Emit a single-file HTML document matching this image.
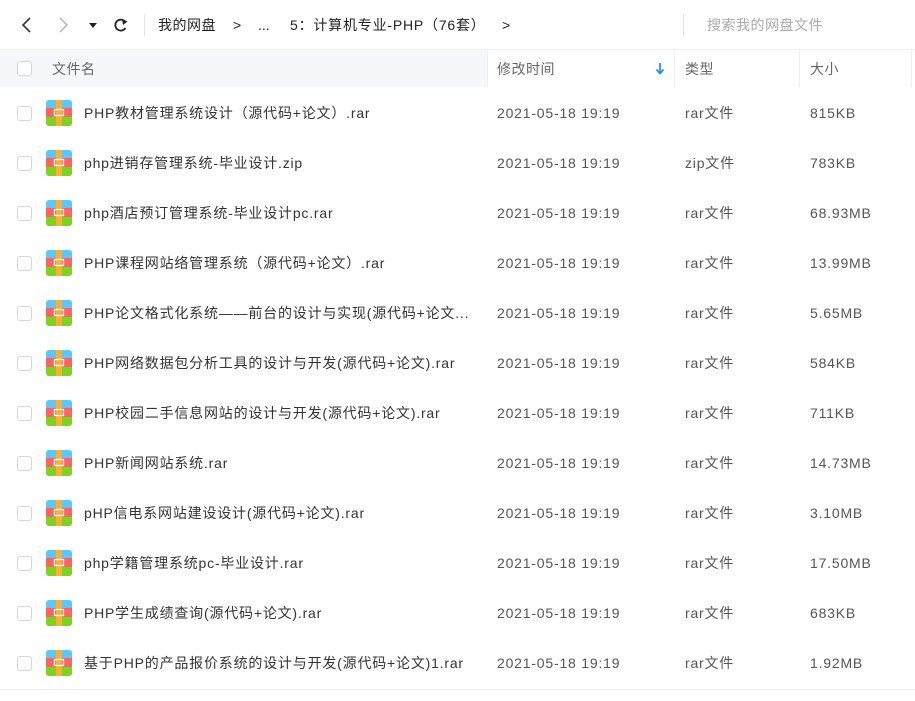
<!DOCTYPE html>
<html><head><meta charset="utf-8"><style>
*{margin:0;padding:0;box-sizing:border-box}
body{width:915px;height:701px;background:#fff;font-family:"Liberation Sans","Noto Sans CJK SC",sans-serif;color:#333;position:relative;overflow:hidden}
.t{position:absolute;white-space:nowrap;line-height:20px}
.cb{position:absolute;left:17px;width:15px;height:15px;border:1px solid #d3d6dc;border-radius:3px;background:#fff}
.row{position:absolute;left:0;width:915px;height:50px}
.row .t{letter-spacing:0.8px}
.row .n{left:84px;top:15px;font-size:14px;color:#333}
.row .d{left:497px;top:15px;font-size:14px;color:#555}
.row .y{left:685px;top:15px;font-size:14px;color:#555}
.row .s{left:810px;top:15px;font-size:14px;color:#555}
.ic{position:absolute;left:46px;top:12px}
.hd{letter-spacing:0.5px}
</style></head><body>
<svg class="t" style="left:18px;top:15px" width="120" height="20" viewBox="0 0 120 20">
<path d="M12 3 L5 10 L12 17" fill="none" stroke="#333" stroke-width="1.6"/>
<path d="M42 3 L49 10 L42 17" fill="none" stroke="#bbb" stroke-width="1.6"/>
<path d="M71 8 L79 8 L75 13 Z" fill="#222"/>
<path d="M107 6.5 A5.5 5.5 0 1 0 107.5 13" fill="none" stroke="#222" stroke-width="1.8"/>
<path d="M104 4 L109.5 6.5 L105 10 Z" fill="#222"/>
</svg>
<div class="t" style="left:144px;top:14px;width:1px;height:22px;background:#e5e5e5"></div>
<div class="t hd" style="left:158px;top:15px;font-size:14px;color:#222">我的网盘</div>
<div class="t" style="left:233px;top:15px;font-size:14px;color:#222">&gt;</div>
<div class="t" style="left:258px;top:15px;font-size:14px;color:#222">...</div>
<div class="t hd" style="left:290px;top:15px;font-size:14px;color:#222;letter-spacing:0.8px">5：计算机专业-PHP（76套）</div>
<div class="t" style="left:502px;top:15px;font-size:14px;color:#222">&gt;</div>
<div class="t" style="left:683px;top:14px;width:1px;height:22px;background:#e5e5e5"></div>
<div class="t hd" style="left:707px;top:15px;font-size:14px;color:#aaa">搜索我的网盘文件</div>
<div class="t" style="left:0;top:49px;width:915px;height:1px;background:#f0f0f0"></div>
<div class="t" style="left:0;top:50px;width:487px;height:37px;background:#f5f7fa"></div>
<div class="t" style="left:487px;top:50px;width:1px;height:37px;background:#eee"></div>
<div class="t" style="left:674px;top:50px;width:1px;height:37px;background:#eee"></div>
<div class="t" style="left:799px;top:50px;width:1px;height:37px;background:#eee"></div>
<div class="t" style="left:911px;top:50px;width:1px;height:37px;background:#eee"></div>
<div class="cb" style="top:61px"></div>
<div class="t hd" style="left:52px;top:59px;font-size:14px;color:#666">文件名</div>
<div class="t hd" style="left:497px;top:59px;font-size:14px;color:#666">修改时间</div>
<svg class="t" style="left:655px;top:62px" width="10" height="14"><path d="M5 1 V11 M1.5 7.5 L5 11.5 L8.5 7.5" fill="none" stroke="#2b8ff5" stroke-width="1.8"/></svg>
<div class="t hd" style="left:685px;top:59px;font-size:14px;color:#666">类型</div>
<div class="t hd" style="left:810px;top:59px;font-size:14px;color:#666">大小</div>
<div class="t" style="left:0;top:689px;width:915px;height:1px;background:#eee"></div>
<div class="row" style="top:88px"><div class="cb" style="top:18px"></div><svg class="ic" width="26" height="26"><rect width="26" height="26" rx="3" fill="#5ac8fa"/><rect y="8" width="26" height="9" fill="#fe6363"/><path d="M0 17H26V23A3 3 0 0 1 23 26H3A3 3 0 0 1 0 23Z" fill="#7ed321"/><rect x="10" width="6" height="26" fill="#fbb034"/><rect x="8.5" y="9.5" width="9" height="6" fill="none" stroke="#fff" stroke-width="1.3"/></svg><div class="t n">PHP教材管理系统设计（源代码+论文）.rar</div><div class="t d">2021-05-18 19:19</div><div class="t y">rar文件</div><div class="t s">815KB</div></div>
<div class="row" style="top:138px"><div class="cb" style="top:18px"></div><svg class="ic" width="26" height="26"><rect width="26" height="26" rx="3" fill="#5ac8fa"/><rect y="8" width="26" height="9" fill="#fe6363"/><path d="M0 17H26V23A3 3 0 0 1 23 26H3A3 3 0 0 1 0 23Z" fill="#7ed321"/><rect x="10" width="6" height="26" fill="#fbb034"/><rect x="8.5" y="9.5" width="9" height="6" fill="none" stroke="#fff" stroke-width="1.3"/></svg><div class="t n">php进销存管理系统-毕业设计.zip</div><div class="t d">2021-05-18 19:19</div><div class="t y">zip文件</div><div class="t s">783KB</div></div>
<div class="row" style="top:188px"><div class="cb" style="top:18px"></div><svg class="ic" width="26" height="26"><rect width="26" height="26" rx="3" fill="#5ac8fa"/><rect y="8" width="26" height="9" fill="#fe6363"/><path d="M0 17H26V23A3 3 0 0 1 23 26H3A3 3 0 0 1 0 23Z" fill="#7ed321"/><rect x="10" width="6" height="26" fill="#fbb034"/><rect x="8.5" y="9.5" width="9" height="6" fill="none" stroke="#fff" stroke-width="1.3"/></svg><div class="t n">php酒店预订管理系统-毕业设计pc.rar</div><div class="t d">2021-05-18 19:19</div><div class="t y">rar文件</div><div class="t s">68.93MB</div></div>
<div class="row" style="top:238px"><div class="cb" style="top:18px"></div><svg class="ic" width="26" height="26"><rect width="26" height="26" rx="3" fill="#5ac8fa"/><rect y="8" width="26" height="9" fill="#fe6363"/><path d="M0 17H26V23A3 3 0 0 1 23 26H3A3 3 0 0 1 0 23Z" fill="#7ed321"/><rect x="10" width="6" height="26" fill="#fbb034"/><rect x="8.5" y="9.5" width="9" height="6" fill="none" stroke="#fff" stroke-width="1.3"/></svg><div class="t n">PHP课程网站络管理系统（源代码+论文）.rar</div><div class="t d">2021-05-18 19:19</div><div class="t y">rar文件</div><div class="t s">13.99MB</div></div>
<div class="row" style="top:288px"><div class="cb" style="top:18px"></div><svg class="ic" width="26" height="26"><rect width="26" height="26" rx="3" fill="#5ac8fa"/><rect y="8" width="26" height="9" fill="#fe6363"/><path d="M0 17H26V23A3 3 0 0 1 23 26H3A3 3 0 0 1 0 23Z" fill="#7ed321"/><rect x="10" width="6" height="26" fill="#fbb034"/><rect x="8.5" y="9.5" width="9" height="6" fill="none" stroke="#fff" stroke-width="1.3"/></svg><div class="t n">PHP论文格式化系统——前台的设计与实现(源代码+论文...</div><div class="t d">2021-05-18 19:19</div><div class="t y">rar文件</div><div class="t s">5.65MB</div></div>
<div class="row" style="top:338px"><div class="cb" style="top:18px"></div><svg class="ic" width="26" height="26"><rect width="26" height="26" rx="3" fill="#5ac8fa"/><rect y="8" width="26" height="9" fill="#fe6363"/><path d="M0 17H26V23A3 3 0 0 1 23 26H3A3 3 0 0 1 0 23Z" fill="#7ed321"/><rect x="10" width="6" height="26" fill="#fbb034"/><rect x="8.5" y="9.5" width="9" height="6" fill="none" stroke="#fff" stroke-width="1.3"/></svg><div class="t n">PHP网络数据包分析工具的设计与开发(源代码+论文).rar</div><div class="t d">2021-05-18 19:19</div><div class="t y">rar文件</div><div class="t s">584KB</div></div>
<div class="row" style="top:388px"><div class="cb" style="top:18px"></div><svg class="ic" width="26" height="26"><rect width="26" height="26" rx="3" fill="#5ac8fa"/><rect y="8" width="26" height="9" fill="#fe6363"/><path d="M0 17H26V23A3 3 0 0 1 23 26H3A3 3 0 0 1 0 23Z" fill="#7ed321"/><rect x="10" width="6" height="26" fill="#fbb034"/><rect x="8.5" y="9.5" width="9" height="6" fill="none" stroke="#fff" stroke-width="1.3"/></svg><div class="t n">PHP校园二手信息网站的设计与开发(源代码+论文).rar</div><div class="t d">2021-05-18 19:19</div><div class="t y">rar文件</div><div class="t s">711KB</div></div>
<div class="row" style="top:438px"><div class="cb" style="top:18px"></div><svg class="ic" width="26" height="26"><rect width="26" height="26" rx="3" fill="#5ac8fa"/><rect y="8" width="26" height="9" fill="#fe6363"/><path d="M0 17H26V23A3 3 0 0 1 23 26H3A3 3 0 0 1 0 23Z" fill="#7ed321"/><rect x="10" width="6" height="26" fill="#fbb034"/><rect x="8.5" y="9.5" width="9" height="6" fill="none" stroke="#fff" stroke-width="1.3"/></svg><div class="t n">PHP新闻网站系统.rar</div><div class="t d">2021-05-18 19:19</div><div class="t y">rar文件</div><div class="t s">14.73MB</div></div>
<div class="row" style="top:488px"><div class="cb" style="top:18px"></div><svg class="ic" width="26" height="26"><rect width="26" height="26" rx="3" fill="#5ac8fa"/><rect y="8" width="26" height="9" fill="#fe6363"/><path d="M0 17H26V23A3 3 0 0 1 23 26H3A3 3 0 0 1 0 23Z" fill="#7ed321"/><rect x="10" width="6" height="26" fill="#fbb034"/><rect x="8.5" y="9.5" width="9" height="6" fill="none" stroke="#fff" stroke-width="1.3"/></svg><div class="t n">pHP信电系网站建设设计(源代码+论文).rar</div><div class="t d">2021-05-18 19:19</div><div class="t y">rar文件</div><div class="t s">3.10MB</div></div>
<div class="row" style="top:538px"><div class="cb" style="top:18px"></div><svg class="ic" width="26" height="26"><rect width="26" height="26" rx="3" fill="#5ac8fa"/><rect y="8" width="26" height="9" fill="#fe6363"/><path d="M0 17H26V23A3 3 0 0 1 23 26H3A3 3 0 0 1 0 23Z" fill="#7ed321"/><rect x="10" width="6" height="26" fill="#fbb034"/><rect x="8.5" y="9.5" width="9" height="6" fill="none" stroke="#fff" stroke-width="1.3"/></svg><div class="t n">php学籍管理系统pc-毕业设计.rar</div><div class="t d">2021-05-18 19:19</div><div class="t y">rar文件</div><div class="t s">17.50MB</div></div>
<div class="row" style="top:588px"><div class="cb" style="top:18px"></div><svg class="ic" width="26" height="26"><rect width="26" height="26" rx="3" fill="#5ac8fa"/><rect y="8" width="26" height="9" fill="#fe6363"/><path d="M0 17H26V23A3 3 0 0 1 23 26H3A3 3 0 0 1 0 23Z" fill="#7ed321"/><rect x="10" width="6" height="26" fill="#fbb034"/><rect x="8.5" y="9.5" width="9" height="6" fill="none" stroke="#fff" stroke-width="1.3"/></svg><div class="t n">PHP学生成绩查询(源代码+论文).rar</div><div class="t d">2021-05-18 19:19</div><div class="t y">rar文件</div><div class="t s">683KB</div></div>
<div class="row" style="top:638px"><div class="cb" style="top:18px"></div><svg class="ic" width="26" height="26"><rect width="26" height="26" rx="3" fill="#5ac8fa"/><rect y="8" width="26" height="9" fill="#fe6363"/><path d="M0 17H26V23A3 3 0 0 1 23 26H3A3 3 0 0 1 0 23Z" fill="#7ed321"/><rect x="10" width="6" height="26" fill="#fbb034"/><rect x="8.5" y="9.5" width="9" height="6" fill="none" stroke="#fff" stroke-width="1.3"/></svg><div class="t n">基于PHP的产品报价系统的设计与开发(源代码+论文)1.rar</div><div class="t d">2021-05-18 19:19</div><div class="t y">rar文件</div><div class="t s">1.92MB</div></div>
</body></html>
